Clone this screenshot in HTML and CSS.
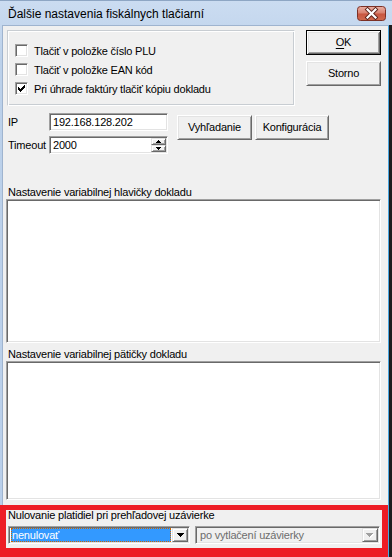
FILE: index.html
```html
<!DOCTYPE html>
<html lang="sk">
<head>
<meta charset="utf-8">
<title>Ďalšie nastavenia fiskálnych tlačiarní</title>
<link rel="stylesheet" href="styles.css">
</head>
<body>
<div class="window">
  <div class="titlebar">
    <span class="title">Ďalšie nastavenia fiskálnych tlačiarní</span>
    <span class="close">
      <svg width="29" height="15" viewBox="0 0 29 15">
        <defs>
          <linearGradient id="cg" x1="0" y1="0" x2="0" y2="1">
            <stop offset="0" stop-color="#eab0a4"/>
            <stop offset="0.48" stop-color="#d8806d"/>
            <stop offset="0.52" stop-color="#c85640"/>
            <stop offset="1" stop-color="#cf6a4e"/>
          </linearGradient>
        </defs>
        <rect x="0.5" y="0.5" width="28" height="14" rx="3" fill="url(#cg)" stroke="#7c3126"/>
        <path d="M10.5 3.5 L18.5 11.5 M18.5 3.5 L10.5 11.5" stroke="#5a2219" stroke-width="4" stroke-linecap="square"/>
        <path d="M10.5 3.5 L18.5 11.5 M18.5 3.5 L10.5 11.5" stroke="#ffffff" stroke-width="2.2" stroke-linecap="square"/>
      </svg>
    </span>
  </div>
  <div class="frame">
    <div class="client">
      <div class="top-row">
        <div class="group">
          <div class="check"><span class="box"></span><span>Tlačiť v položke číslo PLU</span></div>
          <div class="check"><span class="box"></span><span>Tlačiť v položke EAN kód</span></div>
          <div class="check"><span class="box">
            <svg width="7" height="7" viewBox="0 0 7 7" shape-rendering="crispEdges"><path d="M0 2h1v3h-1z M1 3h1v3h-1z M2 4h1v3h-1z M3 3h1v3h-1z M4 2h1v3h-1z M5 1h1v3h-1z M6 0h1v3h-1z" fill="#000"/></svg>
          </span><span>Pri úhrade faktúry tlačiť kópiu dokladu</span></div>
        </div>
        <div class="side-buttons">
          <div class="btn btn-default"><span><u>O</u>K</span></div>
          <div class="btn">Storno</div>
        </div>
      </div>

      <div class="conn-row">
        <div class="fields">
          <div class="field-row">
            <span class="field-label">IP</span>
            <div class="input">192.168.128.202</div>
          </div>
          <div class="field-row">
            <span class="field-label">Timeout</span>
            <div class="input input-spin">
              <span class="input-text">2000</span>
              <span class="spin">
                <span class="spin-btn"><svg width="5" height="3" viewBox="0 0 5 3" shape-rendering="crispEdges"><path d="M2 0h1v1h1v1h1v1h-5v-1h1v-1h1z" fill="#000"/></svg></span>
                <span class="spin-btn"><svg width="5" height="3" viewBox="0 0 5 3" shape-rendering="crispEdges"><path d="M0 0h5v1h-1v1h-1v1h-1v-1h-1v-1h-1z" fill="#000"/></svg></span>
              </span>
            </div>
          </div>
        </div>
        <div class="conn-buttons">
          <div class="btn btn-search">Vyhľadanie</div>
          <div class="btn btn-config">Konfigurácia</div>
        </div>
      </div>

      <div class="section-label label-header">Nastavenie variabilnej hlavičky dokladu</div>
      <div class="memo memo-header"></div>

      <div class="section-label label-footer">Nastavenie variabilnej pätičky dokladu</div>
      <div class="memo memo-footer"></div>

      <div class="section-label label-reset">Nulovanie platidiel pri prehľadovej uzávierke</div>
      <div class="combo-row">
        <div class="combo combo-active">
          <span class="combo-value selected">nenulovať</span>
          <span class="combo-btn">
            <svg width="7" height="4" viewBox="0 0 7 4" shape-rendering="crispEdges"><path d="M0 0h7v1h-1v1h-1v1h-1v1h-1v-1h-1v-1h-1v-1h-1z" fill="#000"/></svg>
          </span>
        </div>
        <div class="combo combo-disabled">
          <span class="combo-value disabled">po vytlačení uzávierky</span>
          <span class="combo-btn">
            <svg width="8" height="5" viewBox="0 0 8 5" shape-rendering="crispEdges"><path d="M1 1h7v1h-1v1h-1v1h-1v1h-1v-1h-1v-1h-1v-1h-1z" fill="#ffffff"/><path d="M0 0h7v1h-1v1h-1v1h-1v1h-1v-1h-1v-1h-1v-1h-1z" fill="#a0a0a0"/></svg>
          </span>
        </div>
      </div>
    </div>
  </div>
  <div class="annotation"></div>
</div>
</body>
</html>
```
FILE: styles.css
```css
* {
  box-sizing: border-box;
}

html, body {
  margin: 0;
  padding: 0;
}

body {
  width: 392px;
  height: 557px;
  overflow: hidden;
  font-family: "Liberation Sans", Arial, sans-serif;
  font-size: 11px;
  letter-spacing: -0.2px;
  color: #000;
  background: #c2d5ec;
}

.window {
  position: relative;
  width: 392px;
  height: 557px;
  display: flex;
  flex-direction: column;
  background: linear-gradient(#cbdcf1, #bcd1ea 60px, #b9cfea);
  border-top: 1px solid #8ea6c4;
}

.titlebar {
  height: 24px;
  display: flex;
  align-items: center;
  justify-content: space-between;
  padding: 0 6px 0 8px;
  flex: none;
}

.title {
  font-size: 12px;
  letter-spacing: 0;
  color: #000;
  line-height: 16px;
  padding-top: 1px;
}

.close {
  display: flex;
  width: 29px;
  height: 15px;
}

.frame {
  flex: 1;
  display: flex;
  padding-left: 2px;
  border-right: 3px solid #1e1e1e;
}

.client {
  flex: 1;
  background: #f0f0f0;
  border-top: 1px solid #9fb4cf;
  border-left: 1px solid #9fb4cf;
  border-right: 1px solid #4aa6e0;
  padding: 4px 7px 0 4px;
  display: flex;
  flex-direction: column;
}

.group {
  width: 288px;
  height: 76px;
  border: 1px solid;
  border-color: #c8cdd2 #fff #fff #c8cdd2;
  box-shadow: inset 1px 1px 0 #fff, inset -1px -1px 0 #c8cdd2;
  padding: 10px 0 0 7px;
  display: flex;
  flex-direction: column;
}

.top-row {
  display: flex;
  align-items: flex-start;
}

.check {
  display: flex;
  align-items: center;
  gap: 6px;
  height: 19px;
  white-space: nowrap;
}

.box {
  width: 13px;
  height: 13px;
  flex: none;
  background: #fff;
  border: 1px solid;
  border-color: #a0a0a0 #fff #fff #a0a0a0;
  box-shadow: inset 1px 1px 0 #696969, inset -1px -1px 0 #e3e3e3;
  display: flex;
  align-items: center;
  justify-content: center;
}

.side-buttons {
  margin-left: 11px;
  display: flex;
  flex-direction: column;
  gap: 6px;
}

.btn {
  width: 75px;
  height: 25px;
  background: #f0f0f0;
  border: 1px solid;
  border-color: #fff #696969 #696969 #fff;
  box-shadow: inset 1px 1px 0 #e3e3e3, inset -1px -1px 0 #a0a0a0;
  display: flex;
  align-items: center;
  justify-content: center;
  white-space: nowrap;
  line-height: 13px;
}

.btn-default {
  border: 1px solid #000;
  box-shadow: inset 1px 1px 0 #fff, inset -1px -1px 0 #696969, inset 2px 2px 0 #e3e3e3, inset -2px -2px 0 #a0a0a0;
}

.btn-default u {
  text-decoration-thickness: 1px;
  text-underline-offset: 2px;
}

.conn-row {
  margin-top: 7px;
  display: flex;
  align-items: flex-start;
}

.fields {
  display: flex;
  flex-direction: column;
  gap: 5px;
}

.field-row {
  display: flex;
  align-items: center;
  height: 18px;
}

.field-label {
  width: 42px;
  padding-left: 1px;
  white-space: nowrap;
}

.input {
  width: 119px;
  height: 18px;
  background: #fff;
  border: 1px solid;
  border-color: #a0a0a0 #fff #fff #a0a0a0;
  box-shadow: inset 1px 1px 0 #696969, inset -1px -1px 0 #e3e3e3;
  padding: 1px 2px 0 3px;
  line-height: 14px;
  white-space: nowrap;
}

.input-spin {
  display: flex;
  align-items: flex-start;
  justify-content: space-between;
  padding-right: 1px;
}

.spin {
  display: flex;
  flex-direction: column;
  width: 15px;
  height: 14px;
}

.spin-btn {
  height: 7px;
  width: 15px;
  background: #f0f0f0;
  border: 1px solid;
  border-color: #e3e3e3 #696969 #696969 #e3e3e3;
  box-shadow: inset 1px 1px 0 #fff, inset -1px -1px 0 #a0a0a0;
  display: flex;
  align-items: center;
  justify-content: center;
}

.conn-buttons {
  margin-left: 9px;
  margin-top: 2px;
  display: flex;
  gap: 3px;
}

.btn-config {
  width: 74px;
}

.section-label {
  height: 13px;
  line-height: 13px;
  padding-left: 1px;
  white-space: nowrap;
}

.label-header {
  margin-top: 32px;
}

.label-footer {
  margin-top: 5px;
}

.label-reset {
  margin-top: 9px;
}

.memo {
  margin-left: -1px;
  width: 375px;
  background: #fff;
  border: 1px solid;
  border-color: #a0a0a0 #fff #fff #a0a0a0;
  box-shadow: inset 1px 1px 0 #696969, inset -1px -1px 0 #e3e3e3;
}

.memo-header {
  height: 144px;
}

.memo-footer {
  height: 139px;
}

.combo-row {
  margin-top: 4px;
  display: flex;
  gap: 5px;
}

.combo {
  height: 18px;
  border: 1px solid;
  border-color: #a0a0a0 #fff #fff #a0a0a0;
  box-shadow: inset 1px 1px 0 #696969, inset -1px -1px 0 #e3e3e3;
  padding: 1px;
  display: flex;
  align-items: stretch;
}

.combo-active {
  width: 182px;
  margin-left: 1px;
  background: #fff;
}

.combo-disabled {
  width: 185px;
  background: #f0f0f0;
}

.combo-value {
  flex: 1;
  line-height: 12px;
  padding-left: 2px;
  white-space: nowrap;
}

.combo-value.selected {
  margin: 0 1px 0 1px;
  background: #3399ff;
  color: #fff;
  border: 1px dotted #cc6600;
  padding-left: 0;
}

.combo-value.disabled {
  color: #6d6d6d;
  padding-left: 3px;
  line-height: 14px;
}

.combo-btn {
  width: 16px;
  flex: none;
  background: #f0f0f0;
  border: 1px solid;
  border-color: #e3e3e3 #696969 #696969 #e3e3e3;
  box-shadow: inset 1px 1px 0 #fff, inset -1px -1px 0 #a0a0a0;
  display: flex;
  align-items: center;
  justify-content: center;
}

.annotation {
  position: absolute;
  left: 0;
  top: 504px;
  width: 388px;
  height: 53px;
  border-style: solid;
  border-color: #ed1c24;
  border-width: 5px 6px 10px 6px;
  pointer-events: none;
}
```
